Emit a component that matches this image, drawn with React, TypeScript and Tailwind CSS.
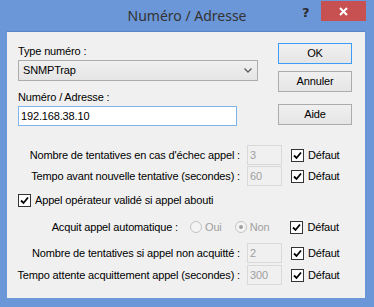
import React from 'react'

const font = { fontFamily: '"Liberation Sans", Arial, sans-serif' }

function Check({ label }: { label: string }) {
  return (
    <div className="flex items-center">
      <span className="w-[13px] h-[13px] border border-[#333333] bg-white flex items-center justify-center">
        <svg width="9" height="9" viewBox="0 0 9 9">
          <path d="M1 4.5 L3.5 7 L8 1.5" fill="none" stroke="#000" strokeWidth="1.8" />
        </svg>
      </span>
      <span className="ml-[4px] text-[11px] text-black">{label}</span>
    </div>
  )
}

function Radio({ label, on }: { label: string; on?: boolean }) {
  return (
    <div className="flex items-center">
      <span className="w-[12px] h-[12px] rounded-full border border-[#c4c4c4] bg-[#f4f4f4] flex items-center justify-center">
        {on && <span className="w-[4px] h-[4px] rounded-full bg-[#a0a0a0]" />}
      </span>
      <span className="ml-[3px] text-[11px] text-[#a0a0a0]">{label}</span>
    </div>
  )
}

function FieldRow({ label, value }: { label: string; value: string }) {
  return (
    <div className="flex items-center h-[20px]">
      <div className="w-[240px] pr-[7px] text-right text-[11px] text-black whitespace-nowrap">{label}</div>
      <div className="w-[35px] h-[20px] border border-[#d9d9d9] bg-[#f0f0f0] px-[2px] flex items-center text-[11px] text-[#a0a0a0]">
        {value}
      </div>
      <div className="ml-[9px]">
        <Check label="Défaut" />
      </div>
    </div>
  )
}

function Button({ label, primary }: { label: string; primary?: boolean }) {
  return (
    <div
      className={`w-[74px] h-[21px] border flex items-center justify-center text-[11px] text-black bg-gradient-to-b from-[#f0f0f0] to-[#e5e5e5] ${
        primary ? 'border-[#3c9cfa]' : 'border-[#acacac]'
      }`}
    >
      {label}
    </div>
  )
}

export default function App() {
  return (
    <div className="w-[374px] h-[307px] bg-[#6b96d8] flex flex-col tracking-[-0.15px]" style={font}>
      {/* Title bar */}
      <div className="relative h-[31px] flex items-center justify-center">
        <span
          className="text-[14px] text-[#333333] -mt-[1px] tracking-normal"
          style={{ fontFamily: '"Noto Sans", "Open Sans", sans-serif' }}
        >
          Numéro / Adresse
        </span>
        <span
          className="absolute left-[302px] top-[3px] text-[13px] font-bold text-[#2b2b2b]"
          style={{ fontFamily: '"DejaVu Sans", sans-serif' }}
        >
          ?
        </span>
        <div className="absolute left-[321px] top-[1px] w-[45px] h-[20px] bg-[#c75050] flex items-center justify-center">
          <svg width="9" height="9" viewBox="0 0 9 9">
            <path d="M1 1 L8 8 M8 1 L1 8" stroke="#fff" strokeWidth="2" />
          </svg>
        </div>
      </div>

      {/* Content */}
      <div className="ml-[7px] mr-[9px] mb-[9px] flex-1 bg-[#f0f0f0] border-t border-[#5a84c6]">
        <div className="flex pl-[11px] pt-[11px]">
          <div className="w-[240px] flex flex-col">
            <div className="h-[16px] flex items-end text-[11px] text-black">Type numéro :</div>
            <div className="mt-[1px] h-[21px] border border-[#acacac] bg-gradient-to-b from-[#f0f0f0] to-[#e5e5e5] flex items-center justify-between pl-[4px] pr-[5px]">
              <span className="text-[11px] text-black">SNMPTrap</span>
              <svg width="8" height="5" viewBox="0 0 8 5">
                <path d="M0.5 0.5 L4 4 L7.5 0.5" fill="none" stroke="#606060" strokeWidth="1.4" />
              </svg>
            </div>
            <div className="mt-[8px] h-[16px] flex items-end text-[11px] text-black">Numéro / Adresse :</div>
            <div className="mt-[1px] w-[219px] h-[20px] border border-[#7eb4ea] bg-white flex items-center pl-[2px] text-[11px] text-black">
              192.168.38.10
            </div>
          </div>
          <div className="ml-[20px] flex flex-col">
            <Button label="OK" primary />
            <div className="mt-[7px]">
              <Button label="Annuler" />
            </div>
            <div className="mt-[12px]">
              <Button label="Aide" />
            </div>
          </div>
        </div>

        <div className="mt-[19px] flex flex-col gap-[1px]">
          <FieldRow label="Nombre de tentatives en cas d'échec appel :" value="3" />
          <FieldRow label="Tempo avant nouvelle tentative (secondes) :" value="60" />
        </div>

        <div className="mt-[4px] h-[20px] pl-[11px] flex items-center">
          <Check label="Appel opérateur validé si appel abouti" />
        </div>

        <div className="mt-[7px] h-[20px] flex items-center">
          <div className="w-[175px] pr-[4px] text-right text-[11px] text-black whitespace-nowrap">Acquit appel automatique :</div>
          <div className="ml-[8px]">
            <Radio label="Oui" />
          </div>
          <div className="ml-[13px]">
            <Radio label="Non" on />
          </div>
          <div className="ml-[21px]">
            <Check label="Défaut" />
          </div>
        </div>

        <div className="mt-[6px] flex flex-col gap-[2px]">
          <FieldRow label="Nombre de tentatives si appel non acquitté :" value="2" />
          <FieldRow label="Tempo attente acquittement appel (secondes) :" value="300" />
        </div>
      </div>
    </div>
  )
}
